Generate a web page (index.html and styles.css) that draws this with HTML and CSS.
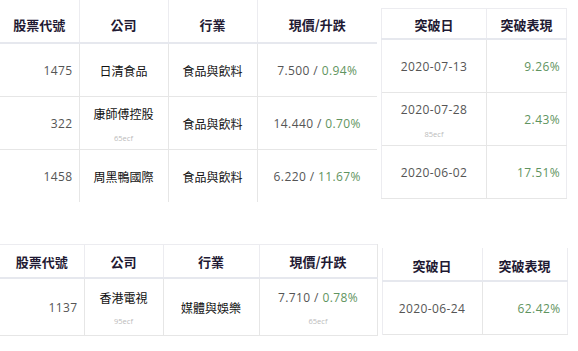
FILE: index.html
```html
<!DOCTYPE html>
<html lang="zh-Hant">
<head>
  <meta charset="UTF-8" />
  <title>突破股票</title>
  <link rel="stylesheet" href="styles.css">
</head>
<body>
  <div class="group group-one">
    <table class="stocks stocks-one">
      <colgroup>
        <col class="c-code"><col class="c-name"><col class="c-ind"><col class="c-price">
      </colgroup>
      <thead>
        <tr><th>股票代號</th><th>公司</th><th>行業</th><th>現價/升跌</th></tr>
      </thead>
      <tbody>
        <tr>
          <td class="num right">1475</td>
          <td class="cjk">日清食品</td>
          <td class="cjk">食品與飲料</td>
          <td class="num">7.500 / <span class="up">0.94%</span></td>
        </tr>
        <tr>
          <td class="num right">322</td>
          <td class="cjk">康師傅控股<span class="tag">65ecf</span></td>
          <td class="cjk">食品與飲料</td>
          <td class="num">14.440 / <span class="up">0.70%</span></td>
        </tr>
        <tr>
          <td class="num right">1458</td>
          <td class="cjk">周黑鴨國際</td>
          <td class="cjk">食品與飲料</td>
          <td class="num">6.220 / <span class="up">11.67%</span></td>
        </tr>
      </tbody>
    </table>

    <table class="breaks breaks-one">
      <colgroup><col class="c-date"><col class="c-perf"></colgroup>
      <thead>
        <tr><th>突破日</th><th>突破表現</th></tr>
      </thead>
      <tbody>
        <tr><td class="num">2020-07-13</td><td class="num right up">9.26%</td></tr>
        <tr><td class="num">2020-07-28<span class="tag">85ecf</span></td><td class="num right up">2.43%</td></tr>
        <tr><td class="num">2020-06-02</td><td class="num right up">17.51%</td></tr>
      </tbody>
    </table>
  </div>

  <div class="group group-two">
    <table class="stocks stocks-two">
      <colgroup>
        <col class="c-code"><col class="c-name"><col class="c-ind"><col class="c-price">
      </colgroup>
      <thead>
        <tr><th>股票代號</th><th>公司</th><th>行業</th><th>現價/升跌</th></tr>
      </thead>
      <tbody>
        <tr>
          <td class="num right">1137</td>
          <td class="cjk">香港電視<span class="tag">95ecf</span></td>
          <td class="cjk">媒體與娛樂</td>
          <td class="num">7.710 / <span class="up">0.78%</span><span class="tag">65ecf</span></td>
        </tr>
      </tbody>
    </table>

    <table class="breaks breaks-two">
      <colgroup><col class="c-date"><col class="c-perf"></colgroup>
      <thead>
        <tr><th>突破日</th><th>突破表現</th></tr>
      </thead>
      <tbody>
        <tr><td class="num">2020-06-24</td><td class="num right up">62.42%</td></tr>
      </tbody>
    </table>
  </div>
</body>
</html>
```

FILE: styles.css
```css
body {
  margin: 0;
  background: #fff;
  font-family: "Noto Sans CJK TC", "Noto Sans", sans-serif;
  color: #111;
}

.group {
  display: flex;
  align-items: flex-start;
  gap: 4px;
}

.group-two {
  margin-top: 42px;
}

table {
  border-collapse: collapse;
  table-layout: fixed;
}

th {
  font-size: 13px;
  font-weight: 700;
  color: #1f1a33;
  text-align: center;
  padding: 0 4px;
  border-left: 1px solid #ececf0;
  border-bottom: 2px solid #e6e8ee;
}

td {
  font-size: 12px;
  text-align: center;
  padding: 0 6px;
  border-left: 1px solid #e6e6e6;
  border-top: 1px solid #e6e6e6;
  vertical-align: middle;
}

th:first-child,
td:first-child {
  border-left: none;
}

tbody tr:first-child td {
  border-top: none;
}

.num {
  font-family: "Open Sans", "Liberation Sans", sans-serif;
  font-size: 12px;
  letter-spacing: 0.4px;
  color: #555;
}

.right {
  text-align: right;
}

.up {
  color: #5f9460;
}

.cjk {
  color: #111;
}

.tag {
  display: block;
  font-family: "Open Sans", sans-serif;
  font-size: 7.5px;
  letter-spacing: 0;
  color: #bbb;
  margin-top: 12px;
  line-height: 8px;
}

/* first block */
.stocks-one { width: 377px; }
.stocks-one .c-code { width: 79px; }
.stocks-one .c-name { width: 89px; }
.stocks-one .c-ind { width: 89px; }
.stocks-one .c-price { width: 120px; }
.stocks-one thead th { height: 36px; padding-top: 6px; }
.stocks-one tbody td { height: 52px; }

.breaks-one {
  width: 185px;
  margin-top: 8px;
  border-top: 1px solid #ececf0;
  border-right: 1px solid #ececf0;
}
.breaks-one .c-date { width: 105px; }
.breaks-one .c-perf { width: 80px; }
.breaks-one thead th { height: 28px; padding-top: 1px; border-left: 1px solid #ececf0; }
.breaks-one tbody td { height: 52px; }
.breaks-one th:first-child,
.breaks-one td:first-child { border-left: 1px solid #ececf0; }
.breaks-one tbody tr:last-child td { border-bottom: 1px solid #e6e6e6; }

/* second block */
.stocks-two {
  width: 377px;
  border-top: 1px solid #ececf0;
  border-bottom: 1px solid #e6e6e6;
}
.stocks-two .c-code { width: 84px; }
.stocks-two .c-name { width: 79px; }
.stocks-two .c-ind { width: 96px; }
.stocks-two .c-price { width: 118px; }
.stocks-two thead th { height: 32px; }
.stocks-two tbody td { height: 56px; }
.stocks-two .tag { margin-top: 11px; }
.stocks-two th:last-child,
.stocks-two td:last-child { border-right: 1px solid #e6e6e6; }

.breaks-two {
  width: 185px;
  margin-top: 4px;
  border-bottom: 1px solid #e6e6e6;
  border-right: 1px solid #ececf0;
}
.breaks-two .c-date { width: 100px; }
.breaks-two .c-perf { width: 85px; }
.breaks-two thead th { height: 30px; padding-top: 2px; }
.breaks-two tbody td { height: 52px; }
.breaks-two th:first-child,
.breaks-two td:first-child { border-left: 1px solid #ececf0; }
```
